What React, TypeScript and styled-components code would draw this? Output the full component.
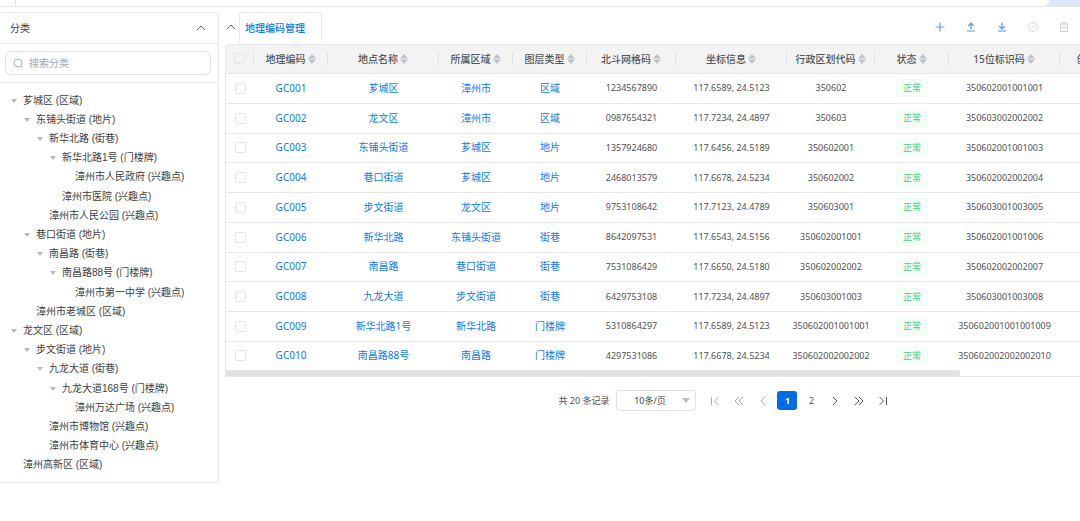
import React from "react";
import styled, { createGlobalStyle } from "styled-components";

const GlobalStyle = createGlobalStyle`
  * { box-sizing: border-box; }
  body {
    margin: 0;
    background: #fff;
    color: #505154;
    font-family: "Noto Sans", "Noto Sans CJK SC", sans-serif;
    font-size: 10px;
    overflow-x: hidden;
  }
  button, input, select { font: inherit; color: inherit; }
  ul { list-style: none; margin: 0; padding: 0; }
`;

const BORDER = "#e7e8ea";
const BLUE = "#0f78ec";

const TopStrip = styled.div`
  display: flex;
  justify-content: space-between;
  height: 7px;
  background: #dbe8fb;
  border-bottom: 1px solid ${BORDER};
`;
const TopStart = styled.div`
  width: 16px;
  background: #fff;
  border-right: 1px solid ${BORDER};
`;
const TopFill = styled.div`
  flex: 1;
  margin-right: 31px;
  background: #fff;
  border-bottom-right-radius: 6px;
`;

const Page = styled.main`
  display: flex;
  align-items: flex-start;
  gap: 6px;
  padding-top: 5px;
`;

const Sidebar = styled.aside`
  flex: none;
  width: 219px;
  border: 1px solid ${BORDER};
  border-left: 0;
  border-radius: 0 3px 3px 0;
`;
const SideHead = styled.div`
  display: flex;
  align-items: center;
  justify-content: space-between;
  height: 31px;
  padding: 0 12px 0 10px;
  border-bottom: 1px solid ${BORDER};
  color: #3a3b3d;
`;
const SideTitle = styled.h2`
  margin: 0;
  font-size: 10px;
  line-height: 14px;
  font-weight: 400;
`;
const IconButton = styled.button<{ $color?: string }>`
  display: flex;
  align-items: center;
  justify-content: center;
  padding: 0;
  border: 0;
  background: none;
  color: ${(p) => p.$color || "#666"};
`;
const SearchArea = styled.div`
  padding: 7px;
  padding-left: 5px;
  border-bottom: 1px solid ${BORDER};
`;
const SearchBox = styled.label`
  display: flex;
  align-items: center;
  gap: 5px;
  height: 24px;
  padding: 0 7px;
  border: 1px solid #dedfe3;
  border-radius: 6px;
  color: #b0b2b8;
`;
const SearchInput = styled.input`
  flex: 1;
  min-width: 0;
  padding: 0;
  border: 0;
  outline: 0;
  background: none;
  &::placeholder { color: #a3a5ab; opacity: 1; }
`;
const Tree = styled.ul`
  display: grid;
  grid-auto-rows: 1fr;
  min-height: 399px;
  && { padding: 8px 0 7px; }
  font-family: "Liberation Sans", "Noto Sans CJK SC", sans-serif;
  color: #3d3e40;
`;
const TreeItem = styled.li<{ $level: number }>`
  display: flex;
  align-items: center;
  gap: 6px;
  padding-left: ${(p) => 11 + p.$level * 13}px;
  line-height: 16px;
  white-space: nowrap;
`;
const TreeArrow = styled.span<{ $open: boolean }>`
  width: 6px;
  border: 3px solid transparent;
  border-top: 4px solid ${(p) => (p.$open ? "#b6b8bd" : "transparent")};
  border-bottom: 0;
`;

const Content = styled.section`
  flex: 1;
  min-width: 0;
`;
const Bar = styled.header`
  display: flex;
  align-items: flex-start;
  height: 32px;
`;
const Collapse = styled(IconButton)`
  width: 10px;
  height: 29px;
  margin: 0 3px 0 1px;
`;
const Tab = styled.a`
  display: flex;
  align-items: center;
  height: 30px;
  width: 83px;
  padding-left: 5px;
  border: 1px solid ${BORDER};
  border-bottom: 0;
  border-radius: 3px 3px 0 0;
  color: ${BLUE};
  font-weight: 500;
  line-height: 14px;
  text-decoration: none;
  white-space: nowrap;
`;
const Actions = styled.div`
  display: flex;
  align-items: center;
  gap: 19px;
  height: 30px;
  margin-left: auto;
  padding-right: 10px;
`;

const TableFrame = styled.div`
  overflow: hidden;
  border: 1px solid ${BORDER};
  border-right: 0;
  border-radius: 3px 0 0 0;
`;
const Table = styled.table`
  width: 993px;
  height: 325px;
  table-layout: fixed;
  border-collapse: separate;
  border-spacing: 0;
  text-align: center;
  white-space: nowrap;
`;
const HeadRow = styled.tr`
  height: 29px;
  background: #f3f3f4;
`;
const HeadCell = styled.th`
  padding: 0 0 1px;
  border-bottom: 1px solid ${BORDER};
  color: #55565a;
  font-weight: 500;
  line-height: 14px;
`;
const HeadInner = styled.div`
  display: flex;
  align-items: center;
  justify-content: center;
  gap: 2px;
  height: 14px;
  border-right: 1px solid #e0e2e5;
`;
const Cell = styled.td`
  padding: 0;
  border-bottom: 1px solid ${BORDER};
  font-size: 9px;
  line-height: 14px;
  tr:last-child > & { border-bottom: 0; }
`;
const CellLink = styled.a`
  color: ${BLUE};
  font-size: 10px;
  text-decoration: none;
`;
const Check = styled.input`
  appearance: none;
  display: block;
  width: 11px;
  height: 11px;
  margin: 0 auto;
  border: 1px solid #e4e5eb;
  border-radius: 2px;
  background: transparent;
`;
const Tag = styled.span`
  display: inline-flex;
  align-items: center;
  justify-content: center;
  width: 32px;
  height: 18px;
  border: 1px solid #effbf4;
  border-radius: 3px;
  background: #f4fdf8;
  color: #45d080;
  vertical-align: middle;
`;
const ScrollTrack = styled.div`
  height: 6px;
`;
const ScrollThumb = styled.div`
  width: 86%;
  height: 7px;
  border-radius: 0 2px 2px 0;
  background: #e2e2e4;
`;

const Pager = styled.nav`
  display: flex;
  align-items: center;
  justify-content: center;
  margin-top: 13px;
  padding-left: 149px;
  font-size: 9px;
`;
const Total = styled.span`
  margin-right: 7px;
  white-space: nowrap;
`;
const SelectWrap = styled.label`
  display: flex;
  align-items: center;
  width: 80px;
  height: 21px;
  margin-right: 7px;
  padding-right: 5px;
  border: 1px solid #e0e1e4;
  border-radius: 3px;
  color: #b9bbc0;
`;
const SizeSelect = styled.select`
  appearance: none;
  flex: 1;
  min-width: 0;
  padding: 0;
  border: 0;
  outline: 0;
  background: none;
  color: #454649;
  text-align: center;
`;
const PageButton = styled.button<{ $active?: boolean; $muted?: boolean }>`
  display: flex;
  align-items: center;
  justify-content: center;
  width: 20px;
  height: 19px;
  margin: 0 2px;
  padding: 0;
  border: 0;
  border-radius: 3px;
  background: ${(p) => (p.$active ? "#006be6" : "none")};
  color: ${(p) => (p.$active ? "#fff" : p.$muted ? "#a8aaae" : "#555659")};
  font-weight: ${(p) => (p.$active ? 700 : 400)};
`;

const Glyph = ({ d, w = 10, h = 10, sw = 1 }: { d: string; w?: number; h?: number; sw?: number }) => (
  <svg width={w} height={h} viewBox={`0 0 ${w} ${h}`} fill="none" stroke="currentColor" strokeWidth={sw} aria-hidden="true">
    <path d={d} />
  </svg>
);
const SortIcon = () => (
  <svg width="8" height="10" viewBox="0 0 8 10" fill="#bfc2ca" aria-hidden="true">
    <path d="M4 0L8 4.4H0zM4 10L0 5.6H8z" />
  </svg>
);

const CHEVRON_UP = "M1 7L5 3L9 7";

const tree: [number, string, boolean][] = [
  [0, "芗城区 (区域)", true],
  [1, "东铺头街道 (地片)", true],
  [2, "新华北路 (街巷)", true],
  [3, "新华北路1号 (门楼牌)", true],
  [4, "漳州市人民政府 (兴趣点)", false],
  [3, "漳州市医院 (兴趣点)", false],
  [2, "漳州市人民公园 (兴趣点)", false],
  [1, "巷口街道 (地片)", true],
  [2, "南昌路 (街巷)", true],
  [3, "南昌路88号 (门楼牌)", true],
  [4, "漳州市第一中学 (兴趣点)", false],
  [1, "漳州市老城区 (区域)", false],
  [0, "龙文区 (区域)", true],
  [1, "步文街道 (地片)", true],
  [2, "九龙大道 (街巷)", true],
  [3, "九龙大道168号 (门楼牌)", true],
  [4, "漳州万达广场 (兴趣点)", false],
  [2, "漳州市博物馆 (兴趣点)", false],
  [2, "漳州市体育中心 (兴趣点)", false],
  [0, "漳州高新区 (区域)", false],
];

const columns: [string, number][] = [
  ["地理编码", 74],
  ["地点名称", 111],
  ["所属区域", 74],
  ["图层类型", 74],
  ["北斗网格码", 89],
  ["坐标信息", 111],
  ["行政区划代码", 88],
  ["状态", 74],
  ["15位标识码", 111],
  ["创建人", 74],
];

const rows = [
  ["GC001", "芗城区", "漳州市", "区域", "1234567890", "117.6589, 24.5123", "350602", "350602001001001"],
  ["GC002", "龙文区", "漳州市", "区域", "0987654321", "117.7234, 24.4897", "350603", "350603002002002"],
  ["GC003", "东铺头街道", "芗城区", "地片", "1357924680", "117.6456, 24.5189", "350602001", "350602001001003"],
  ["GC004", "巷口街道", "芗城区", "地片", "2468013579", "117.6678, 24.5234", "350602002", "350602002002004"],
  ["GC005", "步文街道", "龙文区", "地片", "9753108642", "117.7123, 24.4789", "350603001", "350603001003005"],
  ["GC006", "新华北路", "东铺头街道", "街巷", "8642097531", "117.6543, 24.5156", "350602001001", "350602001001006"],
  ["GC007", "南昌路", "巷口街道", "街巷", "7531086429", "117.6650, 24.5180", "350602002002", "350602002002007"],
  ["GC008", "九龙大道", "步文街道", "街巷", "6429753108", "117.7234, 24.4897", "350603001003", "350603001003008"],
  ["GC009", "新华北路1号", "新华北路", "门楼牌", "5310864297", "117.6589, 24.5123", "350602001001001", "350602001001001009"],
  ["GC010", "南昌路88号", "南昌路", "门楼牌", "4297531086", "117.6678, 24.5234", "350602002002002", "350602002002002010"],
];

export default function App() {
  return (
    <>
      <GlobalStyle />
      <TopStrip>
        <TopStart />
        <TopFill />
      </TopStrip>
      <Page>
        <Sidebar>
          <SideHead>
            <SideTitle>分类</SideTitle>
            <IconButton aria-label="收起"><Glyph d={CHEVRON_UP} /></IconButton>
          </SideHead>
          <SearchArea>
            <SearchBox>
              <Glyph d="M9 5A4 4 0 1 1 1 5A4 4 0 1 1 9 5M7.8 7.8L10 10" w={11} h={11} />
              <SearchInput placeholder="搜索分类" aria-label="搜索分类" />
            </SearchBox>
          </SearchArea>
          <Tree>
            {tree.map(([level, label, open]) => (
              <TreeItem key={label} $level={level}>
                <TreeArrow $open={open} />
                {label}
              </TreeItem>
            ))}
          </Tree>
        </Sidebar>
        <Content>
          <Bar>
            <Collapse aria-label="收起"><Glyph d={CHEVRON_UP} /></Collapse>
            <Tab href="#">地理编码管理</Tab>
            <Actions>
              <IconButton $color="#5a9ff0" aria-label="新增">
                <Glyph d="M6 1.5V10.5M1.5 6H10.5" w={12} h={12} sw={1.2} />
              </IconButton>
              <IconButton $color="#4a95ee" aria-label="导入">
                <Glyph d="M6 8.5V2M3.2 4.8L6 2L8.8 4.8M2 10H10" w={12} h={12} sw={1.2} />
              </IconButton>
              <IconButton $color="#4a95ee" aria-label="导出">
                <Glyph d="M6 1.5V8M3.2 5.2L6 8L8.8 5.2M2 10H10" w={12} h={12} sw={1.2} />
              </IconButton>
              <IconButton $color="#d5d6d8" aria-label="审核" disabled>
                <Glyph d="M10.5 6A4.5 4.5 0 1 1 1.5 6A4.5 4.5 0 1 1 10.5 6M3.9 6L5.4 7.5L8.2 4.6" w={12} h={12} />
              </IconButton>
              <IconButton $color="#d0d1d4" aria-label="删除" disabled>
                <Glyph d="M1.5 3H10.5M4 3V1.5H8V3M2.5 3V10.5H9.5V3M4.9 5V8.5M7.1 5V8.5" w={12} h={12} />
              </IconButton>
            </Actions>
          </Bar>
          <TableFrame>
            <Table>
              <colgroup>
                <col style={{ width: 28 }} />
                {columns.map(([name, width]) => <col key={name} style={{ width }} />)}
                <col />
              </colgroup>
              <thead>
                <HeadRow>
                  <HeadCell>
                    <HeadInner><Check type="checkbox" aria-label="全选" /></HeadInner>
                  </HeadCell>
                  {columns.map(([name]) => (
                    <HeadCell key={name} scope="col">
                      <HeadInner>{name}<SortIcon /></HeadInner>
                    </HeadCell>
                  ))}
                  <HeadCell />
                </HeadRow>
              </thead>
              <tbody>
                {rows.map(([code, place, area, layer, grid, coord, region, id]) => (
                  <tr key={code}>
                    <Cell><Check type="checkbox" aria-label={code} /></Cell>
                    <Cell><CellLink href="#">{code}</CellLink></Cell>
                    <Cell><CellLink href="#">{place}</CellLink></Cell>
                    <Cell><CellLink href="#">{area}</CellLink></Cell>
                    <Cell><CellLink href="#">{layer}</CellLink></Cell>
                    <Cell>{grid}</Cell>
                    <Cell>{coord}</Cell>
                    <Cell>{region}</Cell>
                    <Cell><Tag>正常</Tag></Cell>
                    <Cell>{id}</Cell>
                    <Cell />
                    <Cell />
                  </tr>
                ))}
              </tbody>
            </Table>
            <ScrollTrack><ScrollThumb /></ScrollTrack>
          </TableFrame>
          <Pager aria-label="分页">
            <Total>共 20 条记录</Total>
            <SelectWrap>
              <SizeSelect aria-label="每页条数"><option>10条/页</option></SizeSelect>
              <svg width="8" height="5" viewBox="0 0 8 5" fill="currentColor" aria-hidden="true"><path d="M0 0H8L4 5z" /></svg>
            </SelectWrap>
            <PageButton $muted aria-label="首页"><Glyph d="M1.5 1V9M8.5 1L4.5 5L8.5 9" /></PageButton>
            <PageButton $muted aria-label="向前五页"><Glyph d="M5 1L1 5L5 9M9 1L5 5L9 9" /></PageButton>
            <PageButton $muted aria-label="上一页"><Glyph d="M7 1L3 5L7 9" /></PageButton>
            <PageButton $active>1</PageButton>
            <PageButton>2</PageButton>
            <PageButton aria-label="下一页"><Glyph d="M3 1L7 5L3 9" /></PageButton>
            <PageButton aria-label="向后五页"><Glyph d="M1 1L5 5L1 9M5 1L9 5L5 9" /></PageButton>
            <PageButton aria-label="末页"><Glyph d="M1.5 1L5.5 5L1.5 9M8.5 1V9" /></PageButton>
          </Pager>
        </Content>
      </Page>
    </>
  );
}
